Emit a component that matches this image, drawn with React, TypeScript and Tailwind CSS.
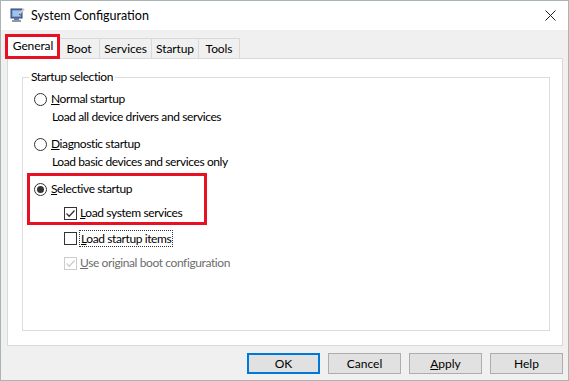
import React from "react"

const font = { fontFamily: 'Lato, "Noto Sans", "Liberation Sans", sans-serif' }

function AppIcon() {
  return (
    <svg width="15" height="15" viewBox="0 0 15 15">
      <rect x="1" y="1" width="11" height="9" fill="#5b7fc0" stroke="#33466e" strokeWidth="1" />
      <rect x="2.5" y="2.5" width="8" height="6" fill="#9fc3f0" />
      <rect x="4" y="10" width="5" height="2" fill="#6d7b8f" />
      <rect x="2" y="12" width="9" height="2" fill="#8d99aa" />
      <path d="M9 6 L14 1" stroke="#c8c8c8" strokeWidth="2" />
      <path d="M9 6 L10.5 7" stroke="#444" strokeWidth="1" />
    </svg>
  )
}

function Radio({ checked }: { checked?: boolean }) {
  return (
    <span className="w-[13px] h-[13px] rounded-full border border-[#333] bg-white flex items-center justify-center shrink-0">
      {checked && <span className="w-[7px] h-[7px] rounded-full bg-[#333]" />}
    </span>
  )
}

function Check({ checked, disabled }: { checked?: boolean; disabled?: boolean }) {
  const c = disabled ? "#cccccc" : "#333333"
  return (
    <span
      className={`w-[13px] h-[13px] border bg-white flex items-center justify-center shrink-0 ${
        disabled ? "border-[#cccccc]" : "border-[#333]"
      }`}
    >
      {checked && (
        <svg width="11" height="11" viewBox="0 0 11 11">
          <path d="M1.5 5.5 L4.2 8.2 L9.5 2.5" fill="none" stroke={c} strokeWidth="1.3" />
        </svg>
      )}
    </span>
  )
}

function Tab({ label, w, active }: { label: string; w: string; active?: boolean }) {
  if (active) {
    return (
      <div className={`${w} h-[23px] -mb-px bg-white border border-b-0 border-[#d9d9d9] flex items-center justify-center z-10`}>
        <span className="-mt-[3px]">{label}</span>
      </div>
    )
  }
  return (
    <div className={`${w} h-[20px] mt-[3px] -ml-px border border-b-0 border-[#d9d9d9] bg-[#f0f0f0] flex items-center justify-center`}>
      {label}
    </div>
  )
}

function Btn({ children, primary }: { children: React.ReactNode; primary?: boolean }) {
  return (
    <div
      className={`w-[73px] h-[21px] bg-[#e1e1e1] flex items-center justify-center ${
        primary ? "border-2 border-[#0078d7]" : "border border-[#adadad]"
      }`}
    >
      {children}
    </div>
  )
}

export default function App() {
  return (
    <div
      style={font}
      className="relative w-[569px] h-[381px] border border-[#a8b5b2] bg-[#f0f0f0] flex flex-col text-[12px] text-black leading-[16px]"
    >
      {/* title bar */}
      <div className="h-[29px] bg-white flex items-center pl-[9px] pr-[12px]">
        <AppIcon />
        <span className="ml-[6px] text-[12.5px]">System Configuration</span>
        <svg className="ml-auto" width="11" height="11" viewBox="0 0 11 11">
          <path d="M0.5 0.5 L10.5 10.5 M10.5 0.5 L0.5 10.5" stroke="#222" strokeWidth="1" />
        </svg>
      </div>

      {/* tabs */}
      <div className="flex pl-[6px] mt-[5px] items-start tracking-[-0.1px]">
        <Tab label="General" w="w-[52px]" active />
        <Tab label="Boot" w="w-[42px]" />
        <Tab label="Services" w="w-[53px]" />
        <Tab label="Startup" w="w-[48px]" />
        <Tab label="Tools" w="w-[42px]" />
      </div>

      {/* panel */}
      <div className="ml-[6px] mr-[5px] h-[288px] bg-white border border-[#d9d9d9] pt-[18px] pl-[14px] pr-[12px] pb-[14px] flex tracking-[-0.4px]">
        <div className="relative flex-1 border border-[#dcdcdc] pl-[11px] pt-[13px] flex flex-col">
          <span className="absolute -top-[9px] left-[6px] bg-white px-[2px]">Startup selection</span>

          <div className="flex items-center h-[16px]">
            <Radio />
            <span className="ml-[4px]">
              <u>N</u>ormal startup
            </span>
          </div>
          <div className="h-[16px] mt-[2px] pl-[18px]">Load all device drivers and services</div>

          <div className="flex items-center h-[16px] mt-[11px]">
            <Radio />
            <span className="ml-[4px]">
              <u>D</u>iagnostic startup
            </span>
          </div>
          <div className="h-[16px] mt-[2px] pl-[18px]">Load basic devices and services only</div>

          <div className="flex items-center h-[16px] mt-[11px]">
            <Radio checked />
            <span className="ml-[4px]">
              <u>S</u>elective startup
            </span>
          </div>
          <div className="flex items-center h-[16px] mt-[8px] pl-[30px]">
            <Check checked />
            <span className="ml-[3px]">
              <u>L</u>oad system services
            </span>
          </div>
          <div className="flex items-center h-[16px] mt-[9px] pl-[30px]">
            <Check />
            <span className="ml-[2px] px-[1px] border border-dotted border-[#333] leading-[15px]">
              <u>L</u>oad startup items
            </span>
          </div>
          <div className="flex items-center h-[16px] mt-[9px] pl-[30px] text-[#6d6d6d]">
            <Check checked disabled />
            <span className="ml-[3px]">
              <u>U</u>se original boot configuration
            </span>
          </div>
        </div>
      </div>

      {/* buttons */}
      <div className="flex justify-end gap-[8px] pr-[5px] mt-[7px]">
        <Btn primary>OK</Btn>
        <Btn>Cancel</Btn>
        <Btn>
          <span>
            <u>A</u>pply
          </span>
        </Btn>
        <Btn>Help</Btn>
      </div>

      {/* red highlight boxes */}
      <div className="absolute left-[4px] top-[33px] w-[55px] h-[25px] border-[3px] border-[#e81123] pointer-events-none z-20" />
      <div className="absolute left-[26px] top-[172px] w-[180px] h-[52px] border-[3px] border-[#e81123] pointer-events-none z-20" />
    </div>
  )
}
